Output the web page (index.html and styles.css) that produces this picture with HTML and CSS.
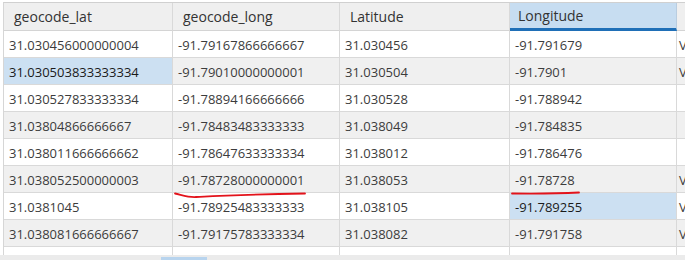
FILE: index.html
```html
<!DOCTYPE html>
<html>
<head>
<meta charset="utf-8">
<link rel="stylesheet" href="styles.css">
</head>
<body>
<div class="page">
  <div class="grid">
    <div class="cell head">geocode_lat</div>
    <div class="cell head">geocode_long</div>
    <div class="cell head">Latitude</div>
    <div class="cell head active">Longitude</div>
    <div class="cell head"></div>

    <div class="cell">31.030456000000004</div>
    <div class="cell">-91.79167866666667</div>
    <div class="cell">31.030456</div>
    <div class="cell">-91.791679</div>
    <div class="cell last">V</div>

    <div class="cell alt sel">31.030503833333334</div>
    <div class="cell alt">-91.79010000000001</div>
    <div class="cell alt">31.030504</div>
    <div class="cell alt">-91.7901</div>
    <div class="cell alt last">V</div>

    <div class="cell">31.030527833333334</div>
    <div class="cell">-91.78894166666666</div>
    <div class="cell">31.030528</div>
    <div class="cell">-91.788942</div>
    <div class="cell last"></div>

    <div class="cell alt">31.03804866666667</div>
    <div class="cell alt">-91.78483483333333</div>
    <div class="cell alt">31.038049</div>
    <div class="cell alt">-91.784835</div>
    <div class="cell alt last"></div>

    <div class="cell">31.038011666666662</div>
    <div class="cell">-91.78647633333334</div>
    <div class="cell">31.038012</div>
    <div class="cell">-91.786476</div>
    <div class="cell last"></div>

    <div class="cell alt">31.038052500000003</div>
    <div class="cell alt">-91.78728000000001</div>
    <div class="cell alt">31.038053</div>
    <div class="cell alt">-91.78728</div>
    <div class="cell alt last">V</div>

    <div class="cell">31.0381045</div>
    <div class="cell">-91.78925483333333</div>
    <div class="cell">31.038105</div>
    <div class="cell sel">-91.789255</div>
    <div class="cell last">V</div>

    <div class="cell alt">31.038081666666667</div>
    <div class="cell alt">-91.79175783333334</div>
    <div class="cell alt">31.038082</div>
    <div class="cell alt">-91.791758</div>
    <div class="cell alt last">V</div>

    <div class="cell filler"></div>
    <div class="cell filler"></div>
    <div class="cell filler"></div>
    <div class="cell filler"></div>
    <div class="cell filler"></div>
  </div>
  <div class="hscroll"><div class="thumb"></div></div>
  <svg class="marks" width="685" height="261" viewBox="0 0 685 261">
    <path d="M175 193.5 C182 195, 188 197.5, 196 197 C215 196, 240 194.5, 305 193.5" fill="none" stroke="#e3131b" stroke-width="1.8" stroke-linecap="round"/>
    <path d="M512 193.5 C535 193.8, 560 193.5, 579 192.5" fill="none" stroke="#e3131b" stroke-width="1.8" stroke-linecap="round"/>
  </svg>
</div>
</body>
</html>
```

FILE: styles.css
```css
* { box-sizing: border-box; }
html, body { margin: 0; padding: 0; background: #ffffff; }
body {
  width: 685px;
  height: 261px;
  overflow: hidden;
  font-family: "Open Sans", "Noto Sans", "Liberation Sans", sans-serif;
  font-size: 13px;
  color: #3c3c3c;
}
.page {
  position: relative;
  width: 685px;
  height: 261px;
  padding-top: 2px;
}
.grid {
  display: grid;
  grid-template-columns: 169px 167px 170px 167px 1fr;
  margin-left: 3px;
  border-left: 1px solid #d6d6d6;
  border-top: 1px solid #d0d0d0;
  overflow: hidden;
}
.cell {
  height: 27px;
  display: flex;
  align-items: center;
  padding-left: 5px;
  padding-top: 1px;
  border-right: 1px solid #d9d9d9;
  border-bottom: 1px solid #d9d9d9;
  white-space: nowrap;
  overflow: hidden;
  background: #ffffff;
}
.cell.last { padding-left: 2px; }
.cell.alt { background: #f0f0f0; }
.cell.sel { background: #cce0f2; color: #1a1a1a; }
.cell.head {
  height: 28px;
  background: #efefef;
  padding-left: 10px;
  padding-top: 0;
  font-size: 14px;
  color: #333333;
  border-bottom: 1px solid #d4d4d4;
}
.cell.head.active {
  background: #c7ddf1;
  padding-left: 8px;
  padding-bottom: 0;
  border-bottom: 3px solid #1f6fb7;
  border-right: 1px solid #b9cde0;
}
.cell.filler {
  height: 8px;
  border-bottom: none;
}
.hscroll {
  height: 5px;
  background: #ebebeb;
  display: flex;
  align-items: flex-end;
  padding-left: 161px;
}
.thumb {
  width: 46px;
  height: 3px;
  background: #b8d4ee;
}
.marks {
  position: absolute;
  left: 0;
  top: 0;
  pointer-events: none;
}
```
